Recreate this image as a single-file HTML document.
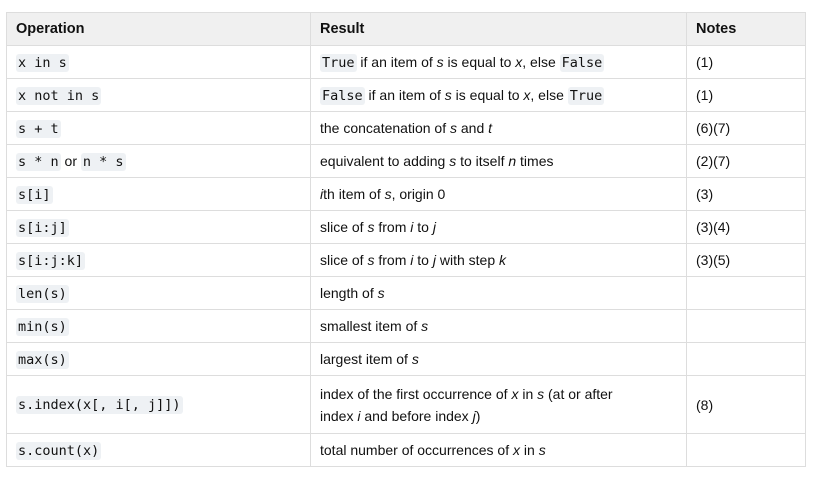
<!DOCTYPE html>
<html><head><style>
body{margin:0;background:#fff;font-family:"Liberation Sans",Arial,sans-serif;font-size:14px;color:#111;}
table{position:absolute;left:6px;top:12px;border-collapse:collapse;width:800px;}
td,th{border:1px solid #ddd;padding:0 9px;text-align:left;vertical-align:middle;height:32px;line-height:22px;}
th{background:#f0f0f0;font-weight:bold;font-size:14.5px;}
code{font-family:"DejaVu Sans Mono","Liberation Mono",monospace;font-size:13.5px;background:#eef1f4;padding:1px 2px;border-radius:3px;}
col.a{width:304px}col.b{width:376px}
</style></head><body>
<table>
<colgroup><col class="a"><col class="b"><col></colgroup>
<tr><th>Operation</th><th>Result</th><th>Notes</th></tr>
<tr><td><code>x in s</code></td><td><code>True</code> if an item of <i>s</i> is equal to <i>x</i>, else <code>False</code></td><td>(1)</td></tr>
<tr><td><code>x not in s</code></td><td><code>False</code> if an item of <i>s</i> is equal to <i>x</i>, else <code>True</code></td><td>(1)</td></tr>
<tr><td><code>s + t</code></td><td>the concatenation of <i>s</i> and <i>t</i></td><td>(6)(7)</td></tr>
<tr><td><code>s * n</code> or <code>n * s</code></td><td>equivalent to adding <i>s</i> to itself <i>n</i> times</td><td>(2)(7)</td></tr>
<tr><td><code>s[i]</code></td><td><i>i</i>th item of <i>s</i>, origin 0</td><td>(3)</td></tr>
<tr><td><code>s[i:j]</code></td><td>slice of <i>s</i> from <i>i</i> to <i>j</i></td><td>(3)(4)</td></tr>
<tr><td><code>s[i:j:k]</code></td><td>slice of <i>s</i> from <i>i</i> to <i>j</i> with step <i>k</i></td><td>(3)(5)</td></tr>
<tr><td><code>len(s)</code></td><td>length of <i>s</i></td><td></td></tr>
<tr><td><code>min(s)</code></td><td>smallest item of <i>s</i></td><td></td></tr>
<tr><td><code>max(s)</code></td><td>largest item of <i>s</i></td><td></td></tr>
<tr><td style="height:57px"><code>s.index(x[, i[, j]])</code></td><td style="padding-right:70px">index of the first occurrence of <i>x</i> in <i>s</i> (at or after index <i>i</i> and before index <i>j</i>)</td><td>(8)</td></tr>
<tr><td><code>s.count(x)</code></td><td>total number of occurrences of <i>x</i> in <i>s</i></td><td></td></tr>
</table>
</body></html>
